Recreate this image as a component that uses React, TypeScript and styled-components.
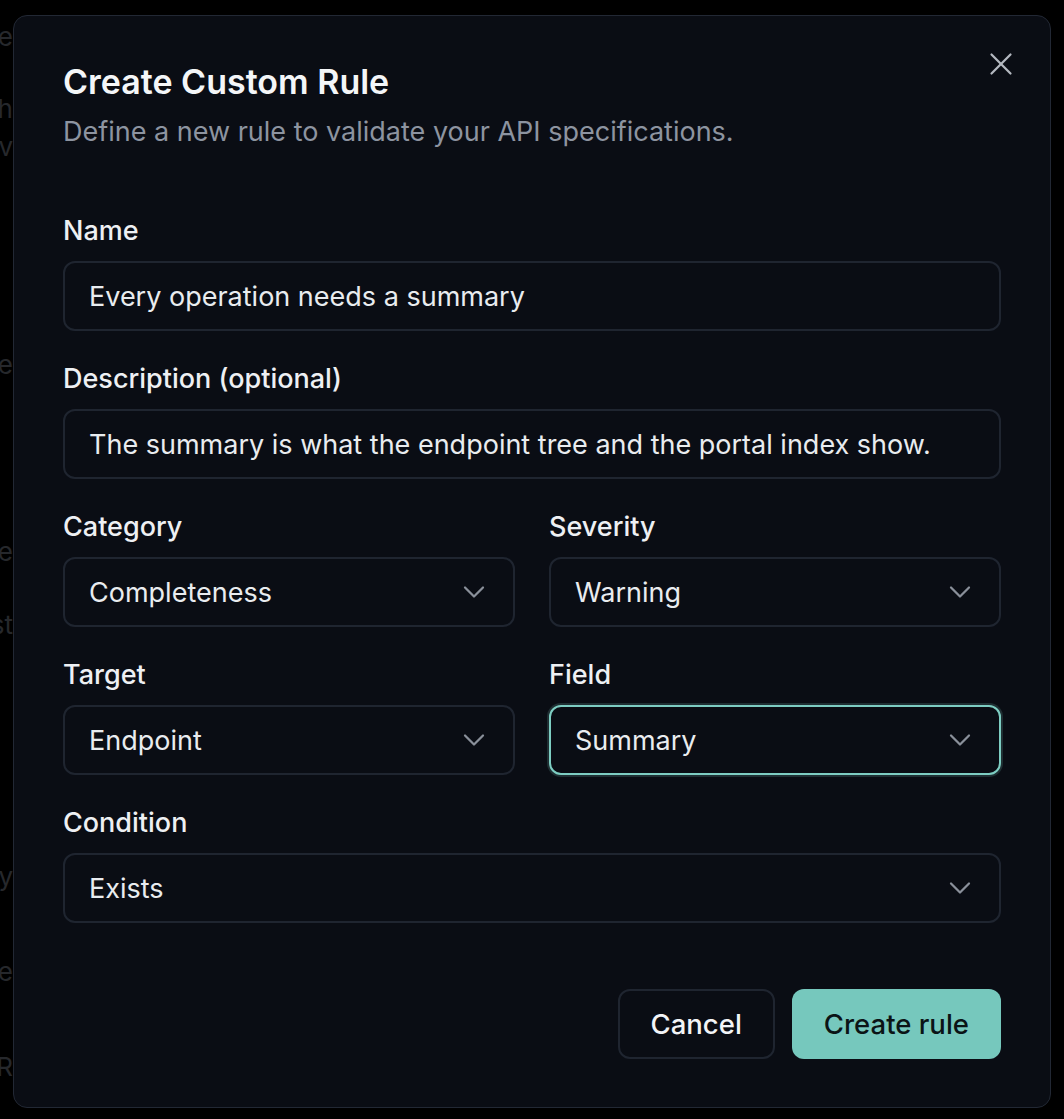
import React from "react";
import styled, { createGlobalStyle } from "styled-components";
import { ChevronDown, X } from "lucide-react";

const GlobalStyle = createGlobalStyle`
  html, body {
    margin: 0;
    padding: 0;
    background: #000;
  }
  body {
    font-family: "Inter", "Liberation Sans", sans-serif;
    -webkit-font-smoothing: antialiased;
  }
`;

const Page = styled.div`
  position: relative;
  width: 1064px;
  height: 1119px;
  overflow: hidden;
  background: #000;
`;

// dimmed page content peeking out behind the modal
const Behind = styled.div`
  width: 13px;
  height: 100%;
  overflow: hidden;
  display: flex;
  flex-direction: column;
  align-items: flex-end;
  color: #26282c;
  font-size: 26px;
  white-space: nowrap;
`;

const Ghost = styled.span<{ $top: number }>`
  margin-top: ${(p) => p.$top}px;
  line-height: 30px;
`;

const Dialog = styled.div`
  position: absolute;
  left: 13px;
  top: 15px;
  width: 1038px;
  box-sizing: border-box;
  padding: 47px 49px 48px;
  background: #0a0d14;
  border: 1px solid #222834;
  border-radius: 14px;
  color: #f2f4f7;
`;

const CloseButton = styled.button`
  position: absolute;
  top: 29px;
  right: 30px;
  width: 38px;
  height: 38px;
  padding: 0;
  border: none;
  background: none;
  color: #b4b9c1;
  display: flex;
  align-items: center;
  justify-content: center;
`;

const Header = styled.div`
  display: flex;
  flex-direction: column;
  gap: 14px;
  margin-bottom: 66px;
`;

const Title = styled.h2`
  margin: 0;
  font-size: 34px;
  line-height: 38px;
  font-weight: 600;
  letter-spacing: 0;
  color: #f4f6f8;
`;

const Subtitle = styled.p`
  margin: 0;
  font-size: 27px;
  line-height: 34px;
  font-weight: 400;
  color: #8d94a0;
`;

const Form = styled.div`
  display: flex;
  flex-direction: column;
  gap: 32px;
`;

const Row = styled.div`
  display: grid;
  grid-template-columns: 1fr 1fr;
  column-gap: 34px;
`;

const Field = styled.div`
  display: flex;
  flex-direction: column;
  gap: 14px;
`;

const Label = styled.label`
  font-size: 27px;
  line-height: 32px;
  font-weight: 500;
  color: #eef0f3;
`;

const Box = styled.div<{ $focused?: boolean }>`
  height: 70px;
  box-sizing: border-box;
  display: flex;
  align-items: center;
  justify-content: space-between;
  padding: 0 21px 0 24px;
  border-radius: 12px;
  border: 2px solid ${(p) => (p.$focused ? "#7dcdc2" : "#1f2530")};
  box-shadow: ${(p) => (p.$focused ? "0 0 0 2px rgba(125, 205, 194, 0.18)" : "none")};
  background: #0a0d14;
  font-size: 27px;
  color: #e9ecef;
`;

const Footer = styled.div`
  display: flex;
  justify-content: flex-end;
  gap: 17px;
  margin-top: 66px;
`;

const Button = styled.button<{ $primary?: boolean }>`
  height: 70px;
  padding: 0 ${(p) => (p.$primary ? 32 : 31)}px;
  border-radius: 12px;
  font-family: "Inter", "Liberation Sans", sans-serif;
  font-size: 27.5px;
  font-weight: 500;
  border: ${(p) => (p.$primary ? "none" : "2px solid #1f2530")};
  background: ${(p) => (p.$primary ? "#76c8bd" : "#0a0d14")};
  color: ${(p) => (p.$primary ? "#0b1416" : "#f2f4f7")};
`;

function Select({ value, focused }: { value: string; focused?: boolean }) {
  return (
    <Box $focused={focused}>
      <span>{value}</span>
      <ChevronDown size={36} color="#8a909a" strokeWidth={1.5} />
    </Box>
  );
}

const ghosts = [
  { top: 22, text: "Rule" },
  { top: 42, text: "Publish" },
  { top: 8, text: "All v" },
  { top: 188, text: "Title" },
  { top: 157, text: "Operation type" },
  { top: 43, text: "Request" },
  { top: 222, text: "Verify" },
  { top: 65, text: "Response" },
  { top: 65, text: "PR" },
];

export default function App() {
  return (
    <Page>
      <GlobalStyle />
      <Behind>
        {ghosts.map((g, i) => (
          <Ghost key={i} $top={g.top}>
            {g.text}
          </Ghost>
        ))}
      </Behind>
      <Dialog>
        <CloseButton>
          <X size={38} strokeWidth={1.4} />
        </CloseButton>
        <Header>
          <Title>Create Custom Rule</Title>
          <Subtitle>Define a new rule to validate your API specifications.</Subtitle>
        </Header>
        <Form>
          <Field>
            <Label>Name</Label>
            <Box>Every operation needs a summary</Box>
          </Field>
          <Field>
            <Label>Description (optional)</Label>
            <Box>The summary is what the endpoint tree and the portal index show.</Box>
          </Field>
          <Row>
            <Field>
              <Label>Category</Label>
              <Select value="Completeness" />
            </Field>
            <Field>
              <Label>Severity</Label>
              <Select value="Warning" />
            </Field>
          </Row>
          <Row>
            <Field>
              <Label>Target</Label>
              <Select value="Endpoint" />
            </Field>
            <Field>
              <Label>Field</Label>
              <Select value="Summary" focused />
            </Field>
          </Row>
          <Field>
            <Label>Condition</Label>
            <Select value="Exists" />
          </Field>
        </Form>
        <Footer>
          <Button>Cancel</Button>
          <Button $primary>Create rule</Button>
        </Footer>
      </Dialog>
    </Page>
  );
}
